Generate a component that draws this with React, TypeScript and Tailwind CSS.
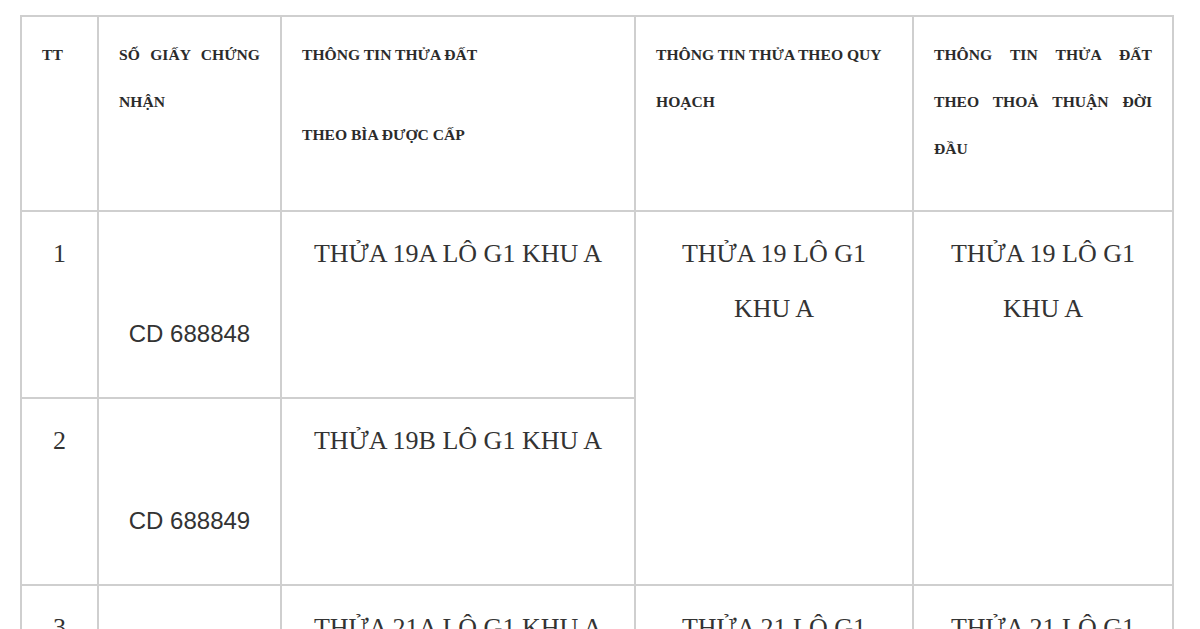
const serif = { fontFamily: '"Liberation Serif", "Times New Roman", serif' };

type Row = {
  tt: string;
  cert: string;
  parcel: string;
  plan?: string[];
  deal?: string[];
  span?: number;
};

const rows: Row[] = [
  { tt: '1', cert: 'CD 688848', parcel: 'THỬA 19A LÔ G1 KHU A', plan: ['THỬA 19 LÔ G1', 'KHU A'], deal: ['THỬA 19 LÔ G1', 'KHU A'], span: 2 },
  { tt: '2', cert: 'CD 688849', parcel: 'THỬA 19B LÔ G1 KHU A' },
  { tt: '3', cert: 'CD 688850', parcel: 'THỬA 21A LÔ G1 KHU A', plan: ['THỬA 21 LÔ G1', 'KHU A'], deal: ['THỬA 21 LÔ G1', 'KHU A'], span: 2 },
  { tt: '4', cert: 'CD 688851', parcel: 'THỬA 21B LÔ G1 KHU A' },
];

const cell = 'border-2 border-[#cfcfcf] align-top px-5 pt-[14px]';
const head = 'text-[15.6px] leading-[47px] font-bold text-[#2b2b2b]';
const body = 'text-[26px] leading-[55px] text-[#333] text-center';

export default function App() {
  return (
    <div className="min-h-screen bg-white pl-[20px] pt-[15px]" style={serif}>
      <table className="border-collapse table-fixed w-[1154px]">
        <colgroup>
          <col className="w-[77px]" />
          <col className="w-[183px]" />
          <col className="w-[354px]" />
          <col className="w-[278px]" />
          <col className="w-[260px]" />
        </colgroup>
        <thead>
          <tr className="h-[195px]">
            <th className={`${cell} ${head} text-left`}>TT</th>
            <th className={`${cell} ${head} text-justify`}>SỐ GIẤY CHỨNG NHẬN</th>
            <th className={`${cell} ${head} text-left`}>
              <p>THÔNG TIN THỬA ĐẤT</p>
              <p className="mt-[33px]">THEO BÌA ĐƯỢC CẤP</p>
            </th>
            <th className={`${cell} ${head} text-left`}>THÔNG TIN THỬA THEO QUY HOẠCH</th>
            <th className={`${cell} ${head} text-justify`}>THÔNG TIN THỬA ĐẤT THEO THOẢ THUẬN ĐỜI ĐẦU</th>
          </tr>
        </thead>
        <tbody>
          {rows.map((r) => (
            <tr key={r.tt} className="h-[187px]">
              <td className={`${cell} ${body}`}>{r.tt}</td>
              <td className={`${cell} ${body}`}>
                <p
                  className="mt-[80px] text-[24px] leading-[55px] text-[#333]"
                  style={{ fontFamily: '"Liberation Sans", Arial, sans-serif' }}
                >
                  {r.cert}
                </p>
              </td>
              <td className={`${cell} ${body}`}>{r.parcel}</td>
              {r.plan && (
                <td rowSpan={r.span} className={`${cell} ${body}`}>
                  {r.plan.map((l) => (
                    <p key={l}>{l}</p>
                  ))}
                </td>
              )}
              {r.deal && (
                <td rowSpan={r.span} className={`${cell} ${body}`}>
                  {r.deal.map((l) => (
                    <p key={l}>{l}</p>
                  ))}
                </td>
              )}
            </tr>
          ))}
        </tbody>
      </table>
    </div>
  );
}
